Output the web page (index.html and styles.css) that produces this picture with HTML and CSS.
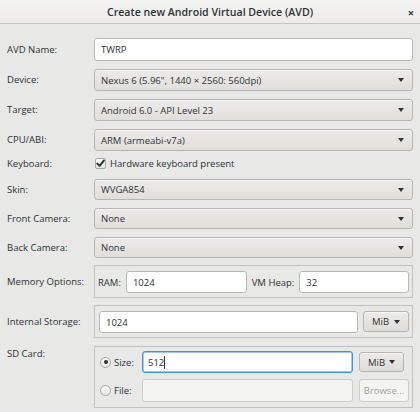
FILE: index.html
```html
<!DOCTYPE html>
<html>
<head>
<meta charset="utf-8">
<link rel="stylesheet" href="styles.css">
</head>
<body>
<div class="window">
  <div class="titlebar">
    <span class="title">Create new Android Virtual Device (AVD)</span>
    <span class="close">×</span>
  </div>
  <div class="form">
    <div class="row r-name">
      <span class="label">AVD Name:</span>
      <div class="entry">TWRP</div>
    </div>
    <div class="row r-sel">
      <span class="label">Device:</span>
      <div class="combo"><span>Nexus 6 (5.96", 1440 × 2560: 560dpi)</span><i class="arrow"></i></div>
    </div>
    <div class="row r-sel">
      <span class="label">Target:</span>
      <div class="combo"><span>Android 6.0 - API Level 23</span><i class="arrow"></i></div>
    </div>
    <div class="row r-sel">
      <span class="label">CPU/ABI:</span>
      <div class="combo"><span>ARM (armeabi-v7a)</span><i class="arrow"></i></div>
    </div>
    <div class="row r-kb">
      <span class="label">Keyboard:</span>
      <div class="check">
        <span class="box"><svg width="9" height="9" viewBox="0 0 9 9"><path d="M1.3 4.6 L3.6 6.9 L7.8 1.6" fill="none" stroke="#2e3436" stroke-width="2" stroke-linecap="round" stroke-linejoin="round"/></svg></span>
        <span>Hardware keyboard present</span>
      </div>
    </div>
    <div class="row r-sel2">
      <span class="label">Skin:</span>
      <div class="combo"><span>WVGA854</span><i class="arrow"></i></div>
    </div>
    <div class="row r-sel2">
      <span class="label">Front Camera:</span>
      <div class="combo"><span>None</span><i class="arrow"></i></div>
    </div>
    <div class="row r-sel2">
      <span class="label">Back Camera:</span>
      <div class="combo"><span>None</span><i class="arrow"></i></div>
    </div>
    <div class="row r-frame">
      <span class="label">Memory Options:</span>
      <div class="frame mem">
        <span>RAM:</span>
        <div class="entry ram">1024</div>
        <span>VM Heap:</span>
        <div class="entry heap">32</div>
      </div>
    </div>
    <div class="row r-frame">
      <span class="label">Internal Storage:</span>
      <div class="frame storage">
        <div class="entry grow">1024</div>
        <div class="button unit">MiB<i class="arrow"></i></div>
      </div>
    </div>
    <div class="row r-sd">
      <span class="label top">SD Card:</span>
      <div class="frame sd">
        <div class="opt"><span class="radio on"></span><span>Size:</span></div>
        <div class="entry focus">512<span class="caret"></span></div>
        <div class="bcell"><div class="button unit small">MiB<i class="arrow"></i></div></div>
        <div class="opt"><span class="radio"></span><span>File:</span></div>
        <div class="entry disabled"></div>
        <div class="bcell"><div class="button disabled-btn">Browse...</div></div>
      </div>
    </div>
  </div>
</div>
</body>
</html>
```
FILE: styles.css
```css
html, body {
  margin: 0;
  padding: 0;
}
body {
  width: 420px;
  height: 412px;
  overflow: hidden;
  background: #e8e8e7;
  font-family: "Open Sans", "Noto Sans", sans-serif;
  font-size: 9.5px;
  color: #2e3436;
}
.window {
  width: 420px;
  height: 412px;
  display: flex;
  flex-direction: column;
}
.titlebar {
  height: 24px;
  box-sizing: border-box;
  border-bottom: 1px solid #c4c4c1;
  background: linear-gradient(#f4f4f3, #ecebea);
  display: flex;
  align-items: center;
  justify-content: center;
  position: relative;
}
.title {
  font-weight: 600;
  font-size: 10.6px;
}
.close {
  position: absolute;
  right: 6px;
  top: 5px;
  font-weight: bold;
  font-size: 11px;
  color: #2e3436;
}
.form {
  display: flex;
  flex-direction: column;
  gap: 8px;
  padding: 14px 7px 0 7px;
}
.row {
  display: flex;
  align-items: center;
}
.label {
  width: 87px;
  flex: none;
  line-height: 14px;
}
.label.top {
  align-self: flex-start;
  padding-top: 1px;
}
.r-name { height: 23px; }
.r-sel { height: 22px; }
.r-sel2 { height: 21px; }
.r-kb { height: 15px; margin-top: -3px; }
.r-frame { height: 33px; margin-top: -1px; }
.r-sd { height: 62px; }

.entry {
  box-sizing: border-box;
  height: 100%;
  flex: 1;
  background: #ffffff;
  border: 1px solid #b9b9b6;
  border-radius: 3px;
  padding-left: 6px;
  display: flex;
  align-items: center;
}
.combo {
  box-sizing: border-box;
  height: 100%;
  flex: 1;
  border: 1px solid #b6b6b3;
  border-radius: 3px;
  background: linear-gradient(#ecebe9, #e1dfdc);
  box-shadow: inset 0 1px #f6f6f5;
  padding: 0 8px 0 6px;
  display: flex;
  align-items: center;
  justify-content: space-between;
}
.arrow {
  display: inline-block;
  width: 0;
  height: 0;
  border-left: 3.5px solid transparent;
  border-right: 3.5px solid transparent;
  border-top: 4px solid #2e3436;
}
.check {
  display: flex;
  align-items: center;
  gap: 4px;
  margin-left: 1px;
}
.box {
  width: 11px;
  height: 11px;
  box-sizing: border-box;
  border: 1px solid #a9a9a6;
  border-radius: 2px;
  background: linear-gradient(#fbfbfb, #e6e6e5);
  display: flex;
  align-items: center;
  justify-content: center;
}
.frame {
  box-sizing: border-box;
  height: 100%;
  flex: 1;
  border: 1px solid #c2c2bf;
  display: flex;
  align-items: center;
}
.mem {
  padding: 5px 3px 4px 3px;
  gap: 5px;
}
.mem .entry.ram { flex: 122; }
.mem .entry.heap { flex: 110; }
.storage {
  padding: 5px 3px 4px 4px;
  gap: 5px;
  align-items: flex-start;
}
.storage .entry { height: 22px; }
.button {
  box-sizing: border-box;
  border: 1px solid #b6b6b3;
  border-radius: 3px;
  background: linear-gradient(#ecebe9, #dfddda);
  box-shadow: inset 0 1px #f6f6f5;
  display: flex;
  align-items: center;
}
.unit {
  width: 46px;
  height: 21px;
  padding: 0 8px 0 8px;
  justify-content: space-between;
}
.unit.small {
  width: 45px;
  height: 20px;
}
.sd {
  display: grid;
  grid-template-columns: 36px 1fr 50px;
  grid-template-rows: 22px 23px;
  column-gap: 6px;
  row-gap: 6px;
  padding: 4px 3px 4px 5px;
  align-content: start;
}
.opt {
  display: flex;
  align-items: center;
  gap: 3px;
}
.radio {
  width: 11px;
  height: 11px;
  box-sizing: border-box;
  border: 1px solid #a9a9a6;
  border-radius: 50%;
  background: linear-gradient(#fbfbfb, #e6e6e5);
  display: flex;
  align-items: center;
  justify-content: center;
}
.radio.on::after {
  content: "";
  width: 4px;
  height: 4px;
  border-radius: 50%;
  background: #2e3436;
}
.entry.focus {
  border-color: #4a90d9;
  padding-left: 5px;
  box-shadow: inset 0 0 0 0.5px #4a90d9;
}
.caret {
  width: 1px;
  height: 13px;
  background: #2e3436;
}
.entry.disabled {
  background: #f4f4f3;
  border-color: #cdcdca;
}
.bcell {
  display: flex;
  align-items: center;
}
.disabled-btn {
  width: 50px;
  height: 23px;
  background: #f4f4f3;
  border-color: #cdcdca;
  box-shadow: none;
  color: #a1a29f;
  justify-content: center;
}
```
